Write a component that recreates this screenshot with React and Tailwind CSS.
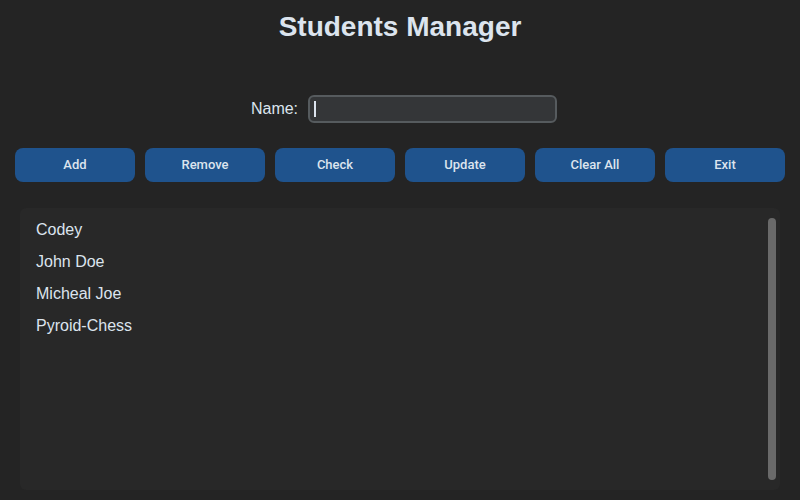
import { useState } from 'react';

const students = ['Codey', 'John Doe', 'Micheal Joe', 'Pyroid-Chess'];
const actions = ['Add', 'Remove', 'Check', 'Update', 'Clear All', 'Exit'];

export default function App() {
  const [name, setName] = useState('');

  return (
    <div className="w-[800px] h-[500px] bg-[#242424] text-[#dce4ee] overflow-hidden flex flex-col font-['Liberation_Sans',sans-serif]">
      <h1 className="text-center text-[28px] font-bold leading-none pt-[13px] h-[40px]">Students Manager</h1>

      <div className="flex items-center justify-center gap-[10px] mt-[55px] pl-[8px]">
        <label className="text-[16px]">Name:</label>
        <div className="relative">
          <input
            value={name}
            onChange={(e) => setName(e.target.value)}
            className="w-[249px] h-[28px] rounded-[6px] border-2 border-[#565b5e] bg-[#343638] px-[5px] text-[15px] outline-none"
          />
          <span className="absolute left-[6px] top-[6px] w-[2px] h-[16px] bg-[#dce4ee]" />
        </div>
      </div>

      <div className="flex gap-[10px] px-[15px] mt-[25px]">
        {actions.map((a) => (
          <button
            key={a}
            className="w-[120px] h-[34px] rounded-[8px] bg-[#1f538d] text-[13px] font-medium font-['Roboto',sans-serif] text-[#dce4ee]"
          >
            {a}
          </button>
        ))}
      </div>

      <div className="mx-[20px] mt-[26px] h-[282px] rounded-[6px] bg-[#282828] flex">
        <ul className="flex-1 pt-[10px] pl-[16px]">
          {students.map((s) => (
            <li key={s} className="h-[32px] text-[16px] leading-[24px]">
              {s}
            </li>
          ))}
        </ul>
        <div className="w-[8px] my-[10px] mr-[4px] rounded-full bg-[#6a6a6a]" />
      </div>
    </div>
  );
}
